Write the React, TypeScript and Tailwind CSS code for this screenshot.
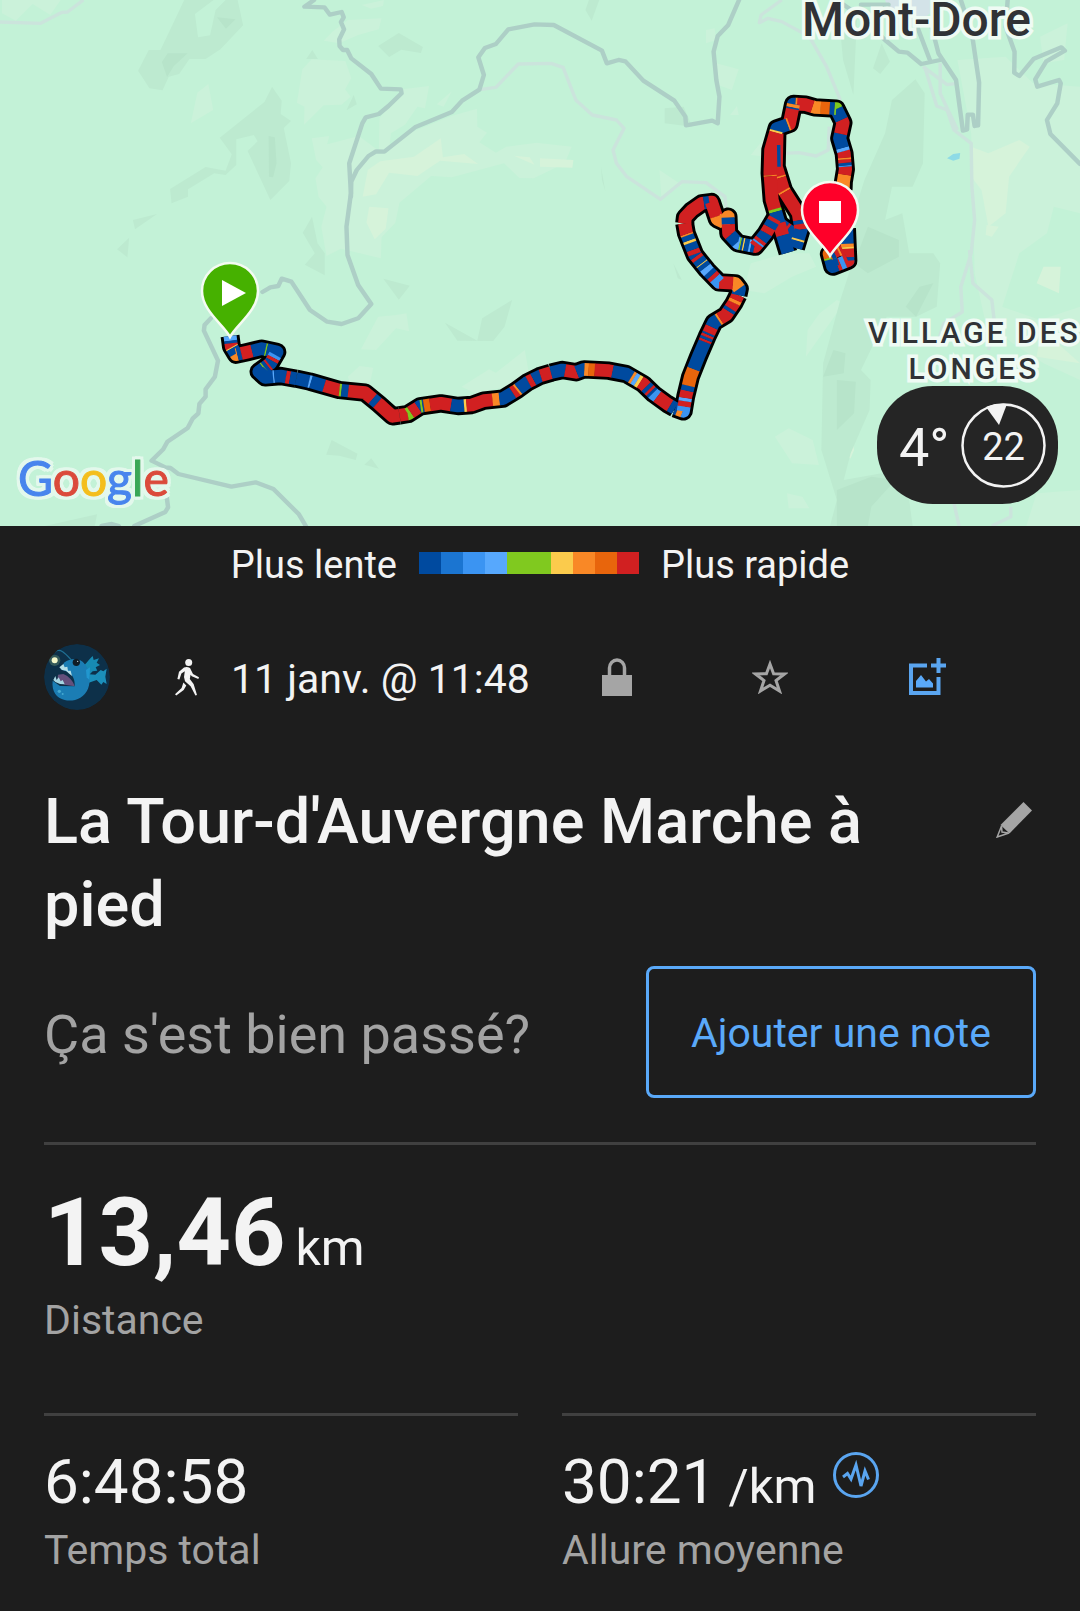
import type { ReactNode } from "react";

const pace = {
  navy: "#004a9f",
  blue: "#1b75d1",
  sky: "#3b94f2",
  light: "#57a8fd",
  lime: "#80c91f",
  yellow: "#fbcb4c",
  orange: "#f98826",
  rust: "#e8650c",
  red: "#d12021",
};

type Pace = keyof typeof pace;

const legend: Pace[] = ["navy", "blue", "sky", "light", "lime", "lime", "yellow", "orange", "rust", "red"];

type Leg = { d: string; steps: [Pace, number][] };

// Every leg is coloured along its length: [pace, length]
const legs: Leg[] = [
  {
    d: "M2240 655 L2275 680 L2322 715",
    steps: [["navy", 20], ["red", 6], ["navy", 24], ["red", 8], ["navy", 60]],
  },
  {
    d: "M2256 400 L2254 500 L2275 570 L2318 640 L2326 690 L2310 744",
    steps: [["red", 130], ["orange", 5], ["red", 40], ["orange", 5], ["red", 96], ["navy", 12], ["red", 16], ["navy", 30], ["yellow", 6], ["navy", 60]],
  },
  {
    d: "M2448 570 L2449 545 L2455 508 L2451 460 L2438 415 L2448 368 L2428 326 L2365 322 L2340 314 L2304 312 L2292 372 L2256 385 L2238 450 L2236 520 L2242 600 L2262 670 L2288 758",
    steps: [["orange", 46], ["red", 24], ["sky", 4], ["navy", 8], ["red", 10], ["orange", 5], ["red", 20], ["light", 10], ["navy", 44], ["red", 44], ["navy", 36], ["lime", 6], ["navy", 14], ["rust", 26], ["orange", 24], ["red", 46], ["orange", 5], ["navy", 6], ["orange", 10], ["navy", 5], ["red", 46], ["orange", 5], ["navy", 40], ["yellow", 6], ["red", 130], ["orange", 3], ["red", 100], ["lime", 8], ["navy", 36], ["red", 38], ["navy", 110]],
  },
  {
    d: "M2458 685 L2462 782 L2418 800 L2408 762 L2445 745",
    steps: [["navy", 46], ["orange", 10], ["yellow", 5], ["red", 26], ["navy", 10], ["red", 10], ["sky", 14], ["red", 10], ["navy", 36], ["lime", 6], ["rust", 14], ["navy", 12], ["red", 12], ["orange", 6], ["red", 20]],
  },
  {
    d: "M668 1008 L672 1040 L686 1064 L720 1056 L760 1046 L804 1056 L785 1090 L752 1115 L770 1132 L815 1128 L860 1136",
    steps: [["light", 14], ["navy", 8], ["red", 12], ["yellow", 3], ["navy", 20], ["orange", 6], ["navy", 12], ["red", 32], ["navy", 40], ["lime", 4], ["navy", 40], ["sky", 10], ["red", 10], ["navy", 14], ["red", 6], ["navy", 10], ["lime", 4], ["navy", 64], ["light", 4], ["navy", 34], ["red", 12], ["navy", 60]],
  },
  {
    d: "M860 1136 L900 1145 L985 1170 L1060 1178 L1100 1212 L1140 1249 L1160 1246",
    steps: [["navy", 38], ["light", 6], ["navy", 40], ["red", 46], ["lime", 6], ["navy", 20], ["red", 78], ["navy", 18], ["red", 90]],
  },
  {
    d: "M1160 1246 L1185 1242 L1220 1219 L1280 1210 L1330 1218 L1370 1215 L1405 1202 L1460 1196 L1500 1171 L1530 1148 L1568 1128 L1600 1118",
    steps: [["red", 24], ["lime", 10], ["red", 26], ["navy", 8], ["lime", 6], ["navy", 4], ["rust", 18], ["red", 62], ["navy", 38], ["yellow", 7], ["red", 78], ["orange", 20], ["navy", 44], ["red", 14], ["orange", 6], ["navy", 36], ["red", 16], ["navy", 24], ["red", 50]],
  },
  {
    d: "M1600 1118 L1633 1110 L1673 1117 L1696 1108 L1768 1112 L1818 1122 L1868 1152 L1898 1182 L1938 1212 L1960 1225",
    steps: [["navy", 42], ["red", 34], ["navy", 24], ["orange", 12], ["rust", 18], ["red", 52], ["navy", 58], ["orange", 8], ["light", 12], ["yellow", 10], ["red", 22], ["navy", 12], ["red", 8], ["navy", 8], ["sky", 16], ["red", 46], ["navy", 40]],
  },
  {
    d: "M1960 1225 L1984 1234 L1991 1190 L2005 1130 L2028 1070 L2053 1010 L2073 967 L2108 945 L2131 910 L2143 885",
    steps: [["navy", 8], ["orange", 16], ["sky", 16], ["red", 16], ["light", 10], ["red", 22], ["navy", 16], ["rust", 52], ["navy", 88], ["red", 7], ["navy", 8], ["red", 8], ["navy", 6], ["red", 20], ["navy", 30], ["orange", 6], ["red", 34], ["navy", 10], ["red", 20], ["orange", 10], ["red", 50]],
  },
  {
    d: "M2143 885 L2147 866 L2135 850 L2088 847 L2053 810 L2018 765 L1993 700 L1988 670",
    steps: [["navy", 20], ["orange", 26], ["red", 40], ["sky", 18], ["red", 12], ["navy", 14], ["light", 16], ["navy", 14], ["yellow", 3], ["navy", 16], ["red", 10], ["navy", 8], ["red", 14], ["navy", 22], ["yellow", 8], ["navy", 16], ["orange", 5], ["red", 60]],
  },
  {
    d: "M1988 670 L1990 652 L2008 632 L2038 610 L2066 606 L2083 658 L2103 668",
    steps: [["red", 88], ["navy", 16], ["red", 52], ["orange", 50]],
  },
  {
    d: "M2098 672 L2114 650 L2116 700 L2143 730 L2193 740 L2223 702 L2250 655",
    steps: [["orange", 30], ["navy", 20], ["red", 34], ["navy", 30], ["light", 8], ["lime", 4], ["navy", 6], ["yellow", 4], ["navy", 14], ["light", 6], ["navy", 10], ["red", 14], ["sky", 6], ["red", 10], ["navy", 24], ["red", 20], ["navy", 20], ["red", 60]],
  },
];

const darkHills =
  "M535 0 L620 0 L566 42 L575 112 L610 106 L626 30 L655 0 L690 0 L706 76 L640 148 L597 177 L550 177 L520 222 L490 230 L472 271 L434 265 L401 212 L432 150 L466 150 Z M790 260 L818 302 L815 342 L845 363 L824 384 L845 490 L840 543 L785 600 L719 453 L748 424 L737 405 L686 418 L686 495 L655 525 L622 520 L546 568 L546 590 L498 610 L494 567 L597 501 L655 512 L673 463 L638 413 L768 306 Z M1098 138 L1158 99 L1228 141 L1222 159 L1165 149 L1130 171 Z M907 150 L923 177 L889 177 Z M1027 285 L1036 313 L1006 331 Z M386 660 L456 642 L392 688 Z M375 713 L370 772 L340 748 Z M906 650 L922 730 L943 760 L943 826 L885 794 L914 760 L879 698 Z M1113 836 L1190 857 L1158 899 Z M1292 968 L1386 1022 L1400 955 L1487 900 L1465 980 L1432 1023 L1328 1022 Z M963 1320 L1038 1361 L1033 1380 L985 1367 L947 1364 Z M1078 1375 L1100 1406 L1058 1394 Z M130 1578 L282 1543 L275 1578 Z M1710 0 L1740 0 L1718 62 L1700 30 Z M2435 40 L2488 60 L2478 285 L2448 180 Z M2560 130 L2584 185 L2556 222 L2535 205 Z M2658 238 L2685 280 L2680 490 L2650 560 L2590 560 L2570 660 L2620 640 L2640 760 L2710 760 L2730 790 L2720 920 L2660 950 L2575 950 L2500 1110 L2528 1140 L2525 1230 L2470 1360 L2450 1440 L2560 1420 L2640 1500 L2650 1578 L2410 1578 L2430 1500 L2385 1350 L2390 1090 L2440 900 L2490 740 L2480 640 L2510 540 L2570 400 L2590 300 Z M1930 325 L1985 320 L2010 380 L1930 370 Z M1745 500 L1758 575 L1748 540 Z M1955 790 L1980 840 L1968 835 Z";

const deepHills =
  "M630 52 L684 58 L656 86 Z M487 160 L545 160 L505 198 L485 231 L470 186 Z M780 408 L798 412 L803 490 L793 532 L781 530 Z M2520 680 L2610 720 L2610 770 L2520 820 L2480 790 Z M2670 860 L2710 850 L2680 910 L2660 950 L2630 920 Z M2420 1050 L2455 1060 L2450 1120 L2390 1130 Z M2430 1140 L2485 1145 L2480 1240 L2430 1290 Z M2430 1470 L2530 1430 L2600 1440 L2530 1520 L2520 1578 L2430 1578 Z";

const lightHills =
  "M6 0 L176 0 L146 45 L95 12 L46 62 L6 40 Z M605 252 L619 330 L554 370 L573 278 Z M905 178 L1003 183 L1020 235 L1002 268 L1018 290 L992 314 L940 316 L883 374 L884 320 L862 308 L878 208 Z M1010 60 L1108 55 L1100 88 L1040 105 L985 130 L940 122 L965 95 Z M1050 15 L1115 0 L1112 18 L1078 26 Z M1168 268 L1246 258 L1234 325 L1212 320 L1176 374 L1135 400 L1130 450 L1100 450 L1102 355 Z M1268 313 L1312 274 L1288 320 Z M905 415 L956 408 L950 433 L1042 408 L1100 452 L1205 392 L1310 348 L1385 326 L1386 380 L1414 398 L1392 427 L1440 458 L1470 440 L1558 428 L1660 440 L1640 490 L1550 535 L1508 534 L1464 490 L1312 532 L1252 528 L1160 608 L1148 668 L1108 712 L1106 775 L990 746 L948 768 L933 680 L948 620 L925 590 L916 535 L937 502 L918 480 Z M1098 950 L1150 945 L1180 940 L1188 994 L1150 985 L1092 1050 L1048 1048 Z M1010 1130 L1044 1098 L1084 1103 L1075 1145 L1015 1145 Z M1340 1160 L1420 1108 L1440 1118 L1524 1050 L1534 1110 L1568 1120 L1520 1150 L1380 1180 Z M2080 190 L2145 208 L2125 270 L2085 255 Z M2050 90 L2075 85 L2080 120 L2050 130 Z M2180 465 L2215 420 L2225 470 Z M2120 345 L2140 318 L2145 345 Z M1915 510 L1980 555 L1920 590 Z M2180 790 L2280 760 L2350 760 L2370 800 L2300 830 L2220 880 L2160 870 Z M2380 940 L2430 900 L2450 910 L2340 1070 L2345 990 Z M2250 1310 L2290 1285 L2360 1320 L2378 1395 L2300 1390 Z M2285 1480 L2330 1490 L2350 1525 L2290 1525 Z M2780 180 L2920 170 L3000 250 L3136 260 L3136 640 L3060 620 L3040 700 L2960 760 L2910 920 L3020 960 L3136 920 L3136 1140 L3030 1090 L2940 1030 L2860 960 L2830 820 L2820 400 Z M3010 1480 L3136 1470 L3136 1578 L2980 1578 Z M3020 110 L3100 70 L3090 180 L3030 190 Z";

const paleHills =
  "M1280 415 L1286 472 L1348 462 L1388 492 L1278 482 L1212 528 L1130 518 L1092 583 L1053 590 L1068 510 L1104 484 L1202 470 Z M1072 620 L1128 625 L1120 686 L1088 718 L1064 668 Z M1492 467 L1538 472 L1552 494 Z M1568 475 L1665 480 L1662 503 L1568 500 Z M2820 440 L2870 460 L2960 420 L2990 440 L2930 530 L2920 640 L2870 680 L2850 570 L2820 530 Z M2865 675 L2900 680 L2880 710 L2862 705 Z M3030 800 L3080 800 L3075 880 L3010 850 Z M2435 1370 L2465 1270 L2480 1350 L2470 1375 Z M3020 1010 L3060 1020 L3136 1090 L3010 1070 Z";

const roads = [
  "M912 0 L884 20 L942 22 L958 44 L992 36 L998 52 L990 66 L999 88 L985 118 L986 138 L996 150 L1008 150 L1020 175 L1078 222 L1106 266 L1164 268 L1166 280 L1128 318 L1100 342 L1062 352 L1052 370 L1014 490 L1019 580 L1006 680 L1009 765 L1040 855 L1078 912 L1040 955 L992 972 L950 965 L900 930 L846 845 L818 836 L808 858 L785 862 L762 876",
  "M1019 590 L1020 545 L1036 510 L1070 468 L1092 454 L1116 455 L1205 382 L1312 336 L1342 302 L1392 269 L1405 225 L1389 172 L1408 144 L1440 132 L1476 88 L1552 73 L1608 75 L1748 152 L1762 190 L1796 180 L1816 184 L1868 242 L1958 302 L1990 350 L1992 376 L2068 362 L2084 370 L2089 290 L2080 240 L2072 155 L2084 108 L2114 76 L2146 0",
  "M612 955 L594 975 L592 992 L633 1082 L624 1130 L597 1168 L597 1190 L579 1212 L576 1240 L560 1255 L545 1284 L486 1325 L474 1348 L440 1382 L480 1402 L495 1404 L518 1422 L672 1460 L742 1447 L794 1467 L868 1543 L888 1578",
  "M484 1490 L488 1522 L480 1536 L390 1578 M295 1578 L325 1572 L345 1578",
  "M2430 0 L2500 50 L2570 120 L2610 155 L2635 158 L2675 192 L2730 180 M2500 14 L2580 14 M2665 85 L2702 185 M2700 60 L2725 160 L2776 240 L2796 392 L2808 388 L2810 344 L2825 344 L2830 378 L2840 376 L2843 248 L2822 100 L2790 0 M2926 0 L2920 80 L2946 155 L2945 218 L2960 228 L3002 176 L3082 142 L3092 152 L3038 184 L3006 238 L3012 260 L3075 240 L3080 250 L3070 310 L3040 360 L3050 402 L3136 492",
];

const paths = [
  "M0 66 L118 70 L180 37 L196 36 L242 0",
  "M1392 269 L1440 262 L1505 192 L1600 190 L1635 202 L1672 300 L1720 345 L1790 360 L1812 385 L1780 450 L1790 490 L1820 530 L1918 598 L1980 545 L2050 548 L2105 590 L2110 640",
  "M2270 0 L2210 45 L2205 68 L2230 55 L2270 65 L2350 110 L2400 200 L2440 300 M2275 460 L2320 458 L2370 468 L2405 450 L2408 380",
  "M2685 200 L2720 318 L2750 330 L2770 390 L2820 430 L2822 560 L2830 660 L2820 760 L2790 860 L2794 936 L2740 970 L2720 1040 M2730 190 L2730 280 L2780 390 M2815 750 L2825 850 L2880 900 L2890 990 L2870 1050 M2770 1510 L2785 1578 M2935 1520 L2935 1550 L2880 1578 M2680 200 L2750 254 L2780 250",
];

function Route({ d, steps }: Leg) {
  let at = 0;
  return (
    <g>
      {steps.map(([tone, length], i) => {
        const start = at;
        at += length;
        return (
          <path
            key={i}
            d={d}
            stroke={pace[tone]}
            strokeWidth={38}
            strokeDasharray={`0 ${start} ${length + 1} 9999`}
          />
        );
      })}
    </g>
  );
}

function Pin({ x, y, color, children }: { x: number; y: number; color: string; children: ReactNode }) {
  return (
    <g transform={`translate(${x} ${y})`}>
      <path
        d="M0 0 C-6 -12 -28 -26 -28 -46 A28 28 0 0 1 28 -46 C28 -26 6 -12 0 0Z"
        fill={color}
        stroke="#f4fbf2"
        strokeWidth="2.5"
      />
      {children}
    </g>
  );
}

function TrackMap() {
  return (
    <svg
      viewBox="0 0 1080 526"
      preserveAspectRatio="xMidYMid slice"
      className="block h-[526px] w-full bg-[#c3f2d7]"
      role="img"
      aria-label="Carte du parcours"
    >
      <g transform="scale(0.34439 0.33333)" fill="none" strokeLinejoin="round">
        <path d={lightHills} fill="#cbf2da" />
        <path d={paleHills} fill="#d6f3da" />
        <path d={darkHills} fill="#bdead0" />
        <path d={deepHills} fill="#b7e4ca" />
        <path d="M2750 475 L2768 462 L2788 459 L2786 476 L2768 482 Z" fill="#8edbe6" />
        <path d="M2570 0 L2700 0 L2700 40 L2660 80 L2610 75 L2580 30 Z" fill="#d3e3e8" />
        {paths.map((d) => (
          <path key={d} d={d} stroke="#cbe4dc" strokeWidth="10" />
        ))}
        {roads.map((d) => (
          <path key={d} d={d} stroke="#adcfc6" strokeWidth="13" strokeLinecap="round" />
        ))}
        {legs.map((leg) => (
          <path key={leg.d} d={leg.d} stroke="#000" strokeWidth="55" />
        ))}
        {legs.map((leg) => (
          <Route key={leg.d} {...leg} />
        ))}
        <path d="M2261 435 L2262 500" stroke="#004a9f" strokeWidth="10" />
      </g>
      <Pin x={230} y={337} color="#46b100">
        <path d="M-8 -57 L16 -44 L-8 -31Z" fill="#fff" />
      </Pin>
      <Pin x={830} y={256} color="#ff0029">
        <path d="M-11 -55 H11 V-33 H-11Z" fill="#fff" />
      </Pin>
    </svg>
  );
}

function Weather() {
  return (
    <div className="absolute right-[22px] bottom-[22px] flex h-[118px] w-[181px] items-center justify-between rounded-[56px] bg-[#252525] pr-3 pl-[22px] text-[#f3f3f3]">
      <span className="pt-[6px] text-[54px] leading-none">4°</span>
      <div className="relative flex size-[85px] items-center justify-center">
        <svg viewBox="0 0 85 85" className="absolute inset-0" aria-hidden="true">
          <circle cx="42.5" cy="42.5" r="41" fill="none" stroke="#f3f3f3" strokeWidth="2.5" />
          <path d="M25 4 Q35 0 46 1 L38 22Z" fill="#f3f3f3" />
        </svg>
        <span className="pt-1 text-[38px] leading-none">22</span>
      </div>
    </div>
  );
}

function Avatar() {
  return (
    <svg viewBox="42 42 198 198" className="size-[66px] rounded-full" role="img" aria-label="Profil">
      <circle cx="141" cy="141" r="99" fill="#0d3049" />
      <path d="M164 104 C172 98 178 86 188 78 L191 90 L207 85 L200 98 L210 105 L197 112 L202 122 L188 124 L178 134Z" fill="#178ab3" />
      <path d="M170 132 L196 134 L212 120 L220 124 L230 116 L226 140 L230 162 L220 156 L214 164 L200 150 L172 160Z" fill="#1b8fba" />
      <path d="M102 98 C122 84 150 82 164 102 C180 122 184 150 174 176 C162 206 130 216 104 210 C80 204 64 184 68 152 L90 168 L134 169 C136 150 128 134 114 126 L92 118Z" fill="#1b7db4" />
      <path d="M168 120 L180 112 L178 150 L170 142Z" fill="#2197cf" />
      <path d="M84 134 L100 132 C116 138 130 154 134 169 L104 164 L82 152Z" fill="#64507c" />
      <path d="M70 150 L76 138 L80 150 L86 142 L92 154 L98 150 L104 163 L90 162 L76 156Z" fill="#a5d5e2" />
      <path d="M88 112 L100 102 L104 112 L112 110 L114 122 L122 122 L126 138 L116 130 L108 122 L96 120Z" fill="#b5dfe8" />
      <path d="M74 66 C90 52 106 70 124 90" fill="none" stroke="#1f6f93" strokeWidth="4" />
      <circle cx="74" cy="91" r="17" fill="#4f7466" opacity=".6" />
      <circle cx="74" cy="91" r="9" fill="#f4f7c9" />
      <circle cx="139" cy="97" r="11" fill="#101c26" />
      <circle cx="143" cy="94" r="2" fill="#d2dfe4" />
      <circle cx="88" cy="184" r="5" fill="#45a9d0" />
      <circle cx="98" cy="192" r="3" fill="#45a9d0" />
    </svg>
  );
}

function WalkIcon() {
  return (
    <svg viewBox="0 0 24 37" className="h-[37px] w-6" fill="#f3f3f3" aria-hidden="true">
      <circle cx="13.7" cy="3.5" r="3.5" />
      <path d="M9 8.5 Q12 7.5 15 9 L18 15 L24 18.3 L23.3 20 L16.8 17.3 L15.6 15.8 L14.8 20 L18.6 25 L22 36 L20.4 36.6 L15.6 27.3 L10 22.3 L9 18 L9.8 12.2 L6.4 14.5 L4.4 20.5 L2.4 20 L4 12.7Z M8.4 23.5 L11.3 26.5 L8.7 31 L1.3 36.6 L0 35.3 L6.6 29Z" />
    </svg>
  );
}

function Metric({ value, unit, label, children }: { value: string; unit?: string; label: string; children?: ReactNode }) {
  return (
    <div className="flex flex-col border-t-[3px] border-[#404040] pt-7">
      <dt className="order-2 text-[41px] leading-[60px] text-[#a3a3a3]">{label}</dt>
      <dd className="flex items-start gap-4">
        <span className="text-[62px] leading-[76px]">
          {value}
          {unit && <span className="text-[49px] leading-none"> {unit}</span>}
        </span>
        {children}
      </dd>
    </div>
  );
}

export default function App() {
  return (
    <main className="min-h-screen bg-[#1d1d1d] font-[Roboto,sans-serif] text-[#f3f3f3]">
      <section className="relative">
        <TrackMap />
        <p className="absolute top-0 right-[49px] text-[48px] leading-10 font-medium text-[#303236] [paint-order:stroke_fill] [-webkit-text-stroke:7px_#effbf4]">
          Mont-Dore
        </p>
        <p className="absolute top-[315px] right-0 w-[212px] text-center text-[30px] leading-9 font-medium tracking-widest whitespace-nowrap text-[#303236] [paint-order:stroke_fill] [-webkit-text-stroke:7px_#effbf4]">
          VILLAGE DES
          <br />
          LONGES
        </p>
        <p className="absolute bottom-5 left-[18px] font-[Lato,sans-serif] text-[48px] leading-[56px] [-webkit-text-stroke:1px_currentColor] [filter:drop-shadow(3px_0_0_#e3f8ec)_drop-shadow(-3px_0_0_#e3f8ec)_drop-shadow(0_3px_0_#e3f8ec)_drop-shadow(0_-3px_0_#e3f8ec)]">
          <span className="text-[#4885ed]">G</span>
          <span className="text-[#db4a3b]">o</span>
          <span className="text-[#f4be1d]">o</span>
          <span className="text-[#4885ed]">g</span>
          <span className="text-[#3aa757]">l</span>
          <span className="text-[#db4a3b]">e</span>
        </p>
        <Weather />
      </section>

      {/* Pace legend */}
      <div className="flex items-center justify-center gap-[22px] pt-[14px] text-[38px] leading-[50px]">
        <span>Plus lente</span>
        <div className="mb-1 flex h-[22px]">
          {legend.map((tone, i) => (
            <span key={i} className="w-[22px]" style={{ backgroundColor: pace[tone] }} />
          ))}
        </div>
        <span>Plus rapide</span>
      </div>

      <div className="px-11">
        <div className="mt-[54px] flex h-[66px] items-center">
          <Avatar />
          <div className="ml-[65px] flex items-center gap-8">
            <WalkIcon />
            <time className="pt-1 text-[41px] leading-[66px]">11 janv. @ 11:48</time>
          </div>
          <div className="ml-auto flex items-center gap-[120px] pr-[90px]">
            <button type="button" aria-label="Confidentialité">
              <svg viewBox="0 0 30 38" className="h-[38px] w-[30px]" aria-hidden="true">
                <path d="M0 17 H30 V38 H0Z" fill="#a5a5a5" />
                <path d="M7.5 18 V10 A7.5 8 0 0 1 22.5 10 V18" fill="none" stroke="#a5a5a5" strokeWidth="3.5" />
              </svg>
            </button>
            <button type="button" aria-label="Favori">
              <svg viewBox="0 0 36 34" className="h-[34px] w-9" fill="none" stroke="#a5a5a5" strokeWidth="3" aria-hidden="true">
                <path d="M18 4 L21.6 13.7 L32.5 14 L24 20.5 L27.5 31 L18 25.2 L8.5 31 L12 20.5 L3.5 14 L14.4 13.7Z" />
              </svg>
            </button>
            <button type="button" aria-label="Ajouter une photo">
              <svg viewBox="0 0 38 38" className="size-[38px]" fill="none" stroke="#5aa5f0" strokeWidth="4" aria-hidden="true">
                <path d="M19 7.5 H3 V35 H30.5 V19 M23 7.5 H38 M30.5 0 V15" />
                <path d="M8 29.5 V23 L13 17 L18 23.5 L21 21 L25 25.5 V29.5Z" fill="#5aa9f9" stroke="none" />
              </svg>
            </button>
          </div>
        </div>

        <div className="mt-[70px] flex items-start justify-between">
          <h1 className="max-w-[860px] text-[63px] leading-[83px] font-medium">
            La Tour-d'Auvergne Marche à pied
          </h1>
          <button type="button" aria-label="Modifier le titre" className="mt-[22px] mr-1">
            <svg viewBox="0 0 36 36" className="size-9" aria-hidden="true">
              <path d="M27.5 0 L36 8.5 L13.5 31.5 L4.5 23Z" fill="#a5a5a5" />
              <path d="M5.5 24 L1.2 35 L13 31 M5.5 24 L6 30 L12.5 31" fill="none" stroke="#a5a5a5" strokeWidth="1.5" />
            </svg>
          </button>
        </div>

        <div className="mt-5 flex items-center justify-between">
          <p className="pt-1 text-[54px] text-[#a3a3a3]">Ça s'est bien passé?</p>
          <button type="button" className="h-[132px] rounded-lg border-[3px] border-[#5aa9f9] px-[42px] pt-1 text-[41px] text-[#5aa9f9]">
            Ajouter une note
          </button>
        </div>

        <dl className="mt-11 border-t-[3px] border-[#404040] pt-8 pb-[62px]">
          <div className="flex flex-col">
            <dt className="order-2 text-[41px] leading-[62px] text-[#a3a3a3]">Distance</dt>
            <dd className="text-[95px] leading-[112px] font-bold">
              13,46<span className="ml-[10px] text-[50px] leading-none font-normal">km</span>
            </dd>
          </div>
        </dl>

        <dl className="grid grid-cols-2 gap-11 pb-8">
          <Metric value="6:48:58" label="Temps total" />
          <Metric value="30:21" unit="/km" label="Allure moyenne">
            <button type="button" aria-label="Graphique d'allure" className="mt-2">
              <svg viewBox="0 0 46 46" className="size-[46px]" fill="none" stroke="#5aa5f0" strokeWidth="3" aria-hidden="true">
                <circle cx="23" cy="23" r="21.5" />
                <path d="M10 25 L14.5 21.5 L18 27 L23 13 L28 34 L32 19 L35.5 27.5" />
              </svg>
            </button>
          </Metric>
        </dl>
      </div>
    </main>
  );
}
